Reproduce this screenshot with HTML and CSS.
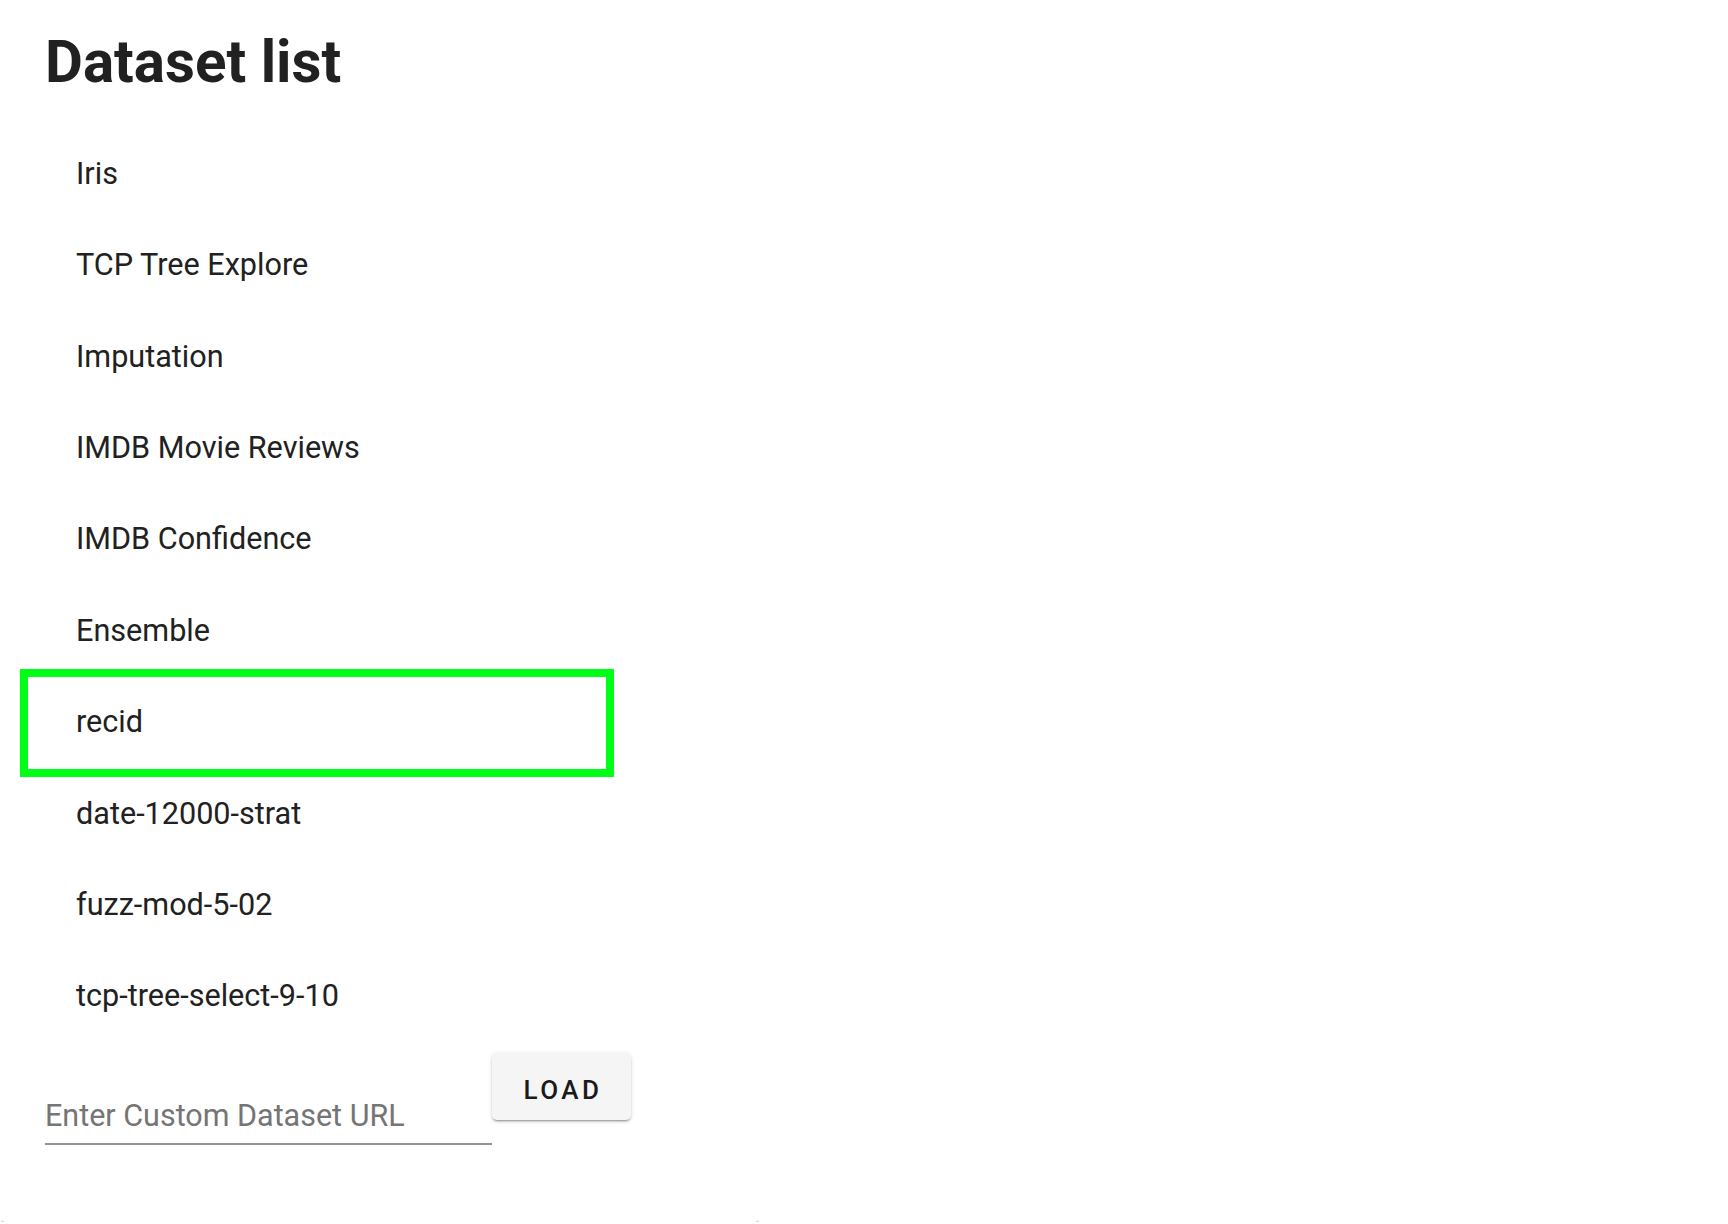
FILE: index.html
```html
<!DOCTYPE html>
<html lang="en">
<head>
<meta charset="utf-8">
<title>Dataset list</title>
<link rel="stylesheet" href="styles.css">
</head>
<body>
<div class="card">
  <h1 class="title">Dataset list</h1>
  <ul class="list">
    <li class="item">Iris</li>
    <li class="item">TCP Tree Explore</li>
    <li class="item">Imputation</li>
    <li class="item">IMDB Movie Reviews</li>
    <li class="item">IMDB Confidence</li>
    <li class="item">Ensemble</li>
    <li class="item selected">recid</li>
    <li class="item">date-12000-strat</li>
    <li class="item">fuzz-mod-5-02</li>
    <li class="item">tcp-tree-select-9-10</li>
  </ul>
  <div class="custom">
    <label class="field"><input class="field-input" type="text" placeholder="Enter Custom Dataset URL"></label>
    <button class="load" type="button">LOAD</button>
  </div>
</div>
</body>
</html>
```
FILE: styles.css
```css
html, body {
  margin: 0;
  padding: 0;
  background: #ffffff;
}
body {
  font-family: Roboto, "Noto Sans", "Liberation Sans", sans-serif;
  color: #212121;
}
.card {
  width: 760px;
  height: 1222px;
  box-sizing: border-box;
  padding: 28px 0 0 44px;
  background: #ffffff;
  border-radius: 5px;
  box-shadow: 0 2px 1px -1px rgba(0,0,0,.3);
}
.title {
  margin: 0 0 0 1px;
  font-size: 58.3px;
  line-height: 68px;
  font-weight: 700;
  color: #212121;
}
.list {
  list-style: none;
  margin: 31.6px 0 0;
  padding: 0;
}
.item {
  position: relative;
  height: 91.4px;
  display: flex;
  align-items: center;
  padding-left: 32px;
  font-size: 30.6px;
  color: #212121;
}
.item.selected::after {
  content: "";
  position: absolute;
  left: -24px;
  top: -7px;
  width: 594px;
  height: 108px;
  box-sizing: border-box;
  border: 8px solid #00ff17;
}
.custom {
  display: flex;
  align-items: flex-start;
  margin-top: 12.4px;
}
.field {
  width: 447px;
  height: 91px;
  margin-left: 1px;
  box-sizing: border-box;
  border-bottom: 2px solid #949494;
  display: flex;
  align-items: flex-end;
}
.field-input {
  width: 100%;
  height: 36px;
  margin: 0 0 9.8px;
  padding: 0;
  border: none;
  outline: none;
  background: transparent;
  font-family: Roboto, "Noto Sans", sans-serif;
  font-size: 30.5px;
  color: #212121;
}
.field-input::placeholder {
  color: #757575;
  opacity: 1;
}
.load {
  width: 139px;
  height: 67px;
  margin-top: -1px;
  padding: 8px 0 0 3px;
  border: none;
  border-radius: 5px;
  background: #f5f5f5;
  box-shadow: 0 3px 1px -2px rgba(0,0,0,.2), 0 2px 2px 0 rgba(0,0,0,.14), 0 1px 5px 0 rgba(0,0,0,.12);
  font-family: Roboto, "Noto Sans", sans-serif;
  font-size: 26px;
  font-weight: 500;
  letter-spacing: 3.5px;
  color: #1a1a1a;
}
```
